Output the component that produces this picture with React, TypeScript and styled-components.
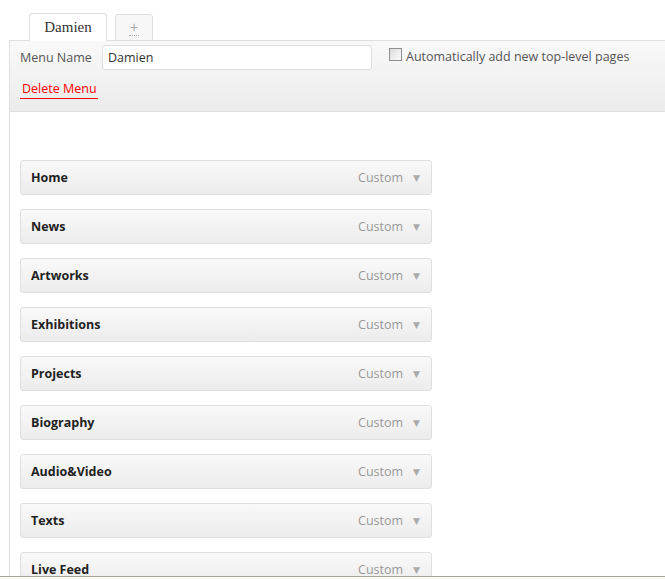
import React from "react";
import styled, { createGlobalStyle } from "styled-components";

const Global = createGlobalStyle`
  html, body { margin: 0; padding: 0; background: #fff; overflow: hidden; }
  body { font-family: "Open Sans", "Liberation Sans", sans-serif; font-size: 12.5px; color: #333; }
`;

const Page = styled.div`
  width: 665px;
  height: 579px;
  position: relative;
  overflow: hidden;
`;

const Tabs = styled.div`
  display: flex;
  align-items: flex-end;
  gap: 8px;
  padding: 13px 0 0 29px;
  position: relative;
  z-index: 2;
  margin-bottom: -1px;
`;

const Tab = styled.div<{ $active?: boolean }>`
  height: ${(p) => (p.$active ? 28 : 27)}px;
  box-sizing: border-box;
  border: 1px solid #dfdfdf;
  border-bottom: ${(p) => (p.$active ? "none" : "1px solid #dfdfdf")};
  border-radius: 3px 3px 0 0;
  background: ${(p) => (p.$active ? "#fff" : "#f7f7f7")};
  display: flex;
  align-items: center;
  justify-content: center;
  width: ${(p) => (p.$active ? 78 : 38)}px;
`;

const TabLabel = styled.span`
  font-family: "Liberation Serif", "DejaVu Serif", serif;
  font-size: 15px;
  color: #333;
  margin-top: 0px;
`;

const Plus = styled.span`
  font-family: "Liberation Sans", sans-serif;
  font-size: 14px;
  color: #aaa;
  line-height: 12px;
  border-bottom: 1px dotted #aaa;
  padding: 0 1px 2px;
  margin-top: 2px;
`;

const Panel = styled.div`
  margin-left: 9px;
  border-left: 1px solid #dfdfdf;
  height: 600px;
`;

const Header = styled.div`
  border-top: 1px solid #dfdfdf;
  border-bottom: 1px solid #dfdfdf;
  background: linear-gradient(to bottom, #f9f9f9, #ececec);
  height: 70px;
  box-sizing: content-box;
  padding: 0 0 0 10px;
  display: flex;
  flex-direction: column;
`;

const NameRow = styled.div`
  display: flex;
  align-items: center;
  height: 24px;
  margin-top: 4px;
`;

const Label = styled.label`
  color: #555;
  font-size: 12.5px;
  width: 82px;
`;

const NameInput = styled.div`
  width: 270px;
  height: 25px;
  box-sizing: border-box;
  background: #fff;
  border: 1px solid #dfdfdf;
  border-radius: 3px;
  padding: 0 5px;
  display: flex;
  align-items: center;
  color: #333;
  font-size: 12.5px;
`;

const Auto = styled.label`
  display: flex;
  align-items: center;
  margin-left: 17px;
  color: #555;
  font-size: 12.5px;
  margin-top: -1px;
`;

const Check = styled.span`
  width: 13px;
  height: 13px;
  box-sizing: border-box;
  border: 1px solid #8f8f8f;
  background: linear-gradient(135deg, #dcdcdc, #fbfbfb);
  margin-right: 4px;
  margin-top: -4px;
`;

const DeleteLink = styled.a`
  color: #f00;
  font-size: 12.5px;
  text-decoration: none;
  border-bottom: 1px solid #f00;
  align-self: flex-start;
  padding: 0 1px 0 2px;
  margin-top: 11px;
  line-height: 18px;
`;

const Body = styled.div`
  padding: 48px 0 0 10px;
  display: flex;
  flex-direction: column;
  gap: 14px;
`;

const Item = styled.div`
  width: 412px;
  height: 35px;
  box-sizing: border-box;
  border: 1px solid #dfdfdf;
  border-radius: 3px;
  background: linear-gradient(to bottom, #f9f9f9, #ececec);
  display: flex;
  align-items: center;
  padding: 0 11px 0 10px;
`;

const ItemTitle = styled.span`
  font-weight: 700;
  color: #222;
  font-size: 12.5px;
  flex: 1;
`;

const ItemType = styled.span`
  color: #999;
  font-size: 12.5px;
  margin-right: 10px;
`;

const Arrow = styled.span`
  color: #aaa;
  font-size: 9px;
  font-family: "DejaVu Sans", sans-serif;
`;

const BottomBar = styled.div`
  position: absolute;
  left: 0;
  right: 0;
  bottom: 0;
  height: 2px;
  border-top: 1px solid #a8a898;
  background: #fcfcf0;
`;

const items = [
  "Home",
  "News",
  "Artworks",
  "Exhibitions",
  "Projects",
  "Biography",
  "Audio&Video",
  "Texts",
  "Live Feed",
];

export default function App() {
  return (
    <Page>
      <Global />
      <Tabs>
        <Tab $active>
          <TabLabel>Damien</TabLabel>
        </Tab>
        <Tab>
          <Plus>+</Plus>
        </Tab>
      </Tabs>
      <Panel>
        <Header>
          <NameRow>
            <Label>Menu Name</Label>
            <NameInput>Damien</NameInput>
            <Auto>
              <Check />
              Automatically add new top-level pages
            </Auto>
          </NameRow>
          <DeleteLink>Delete Menu</DeleteLink>
        </Header>
        <Body>
          {items.map((t) => (
            <Item key={t}>
              <ItemTitle>{t}</ItemTitle>
              <ItemType>Custom</ItemType>
              <Arrow>▼</Arrow>
            </Item>
          ))}
        </Body>
      </Panel>
      <BottomBar />
    </Page>
  );
}
